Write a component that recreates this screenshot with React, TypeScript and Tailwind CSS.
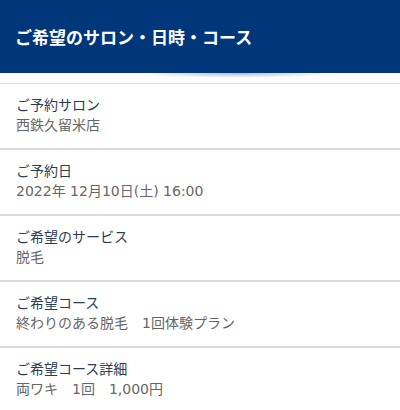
const rows = [
  { label: 'ご予約サロン', value: '西鉄久留米店' },
  { label: 'ご予約日', value: '2022年 12月10日(土) 16:00' },
  { label: 'ご希望のサービス', value: '脱毛' },
  { label: 'ご希望コース', value: '終わりのある脱毛\u30001回体験プラン' },
  { label: 'ご希望コース詳細', value: '両ワキ\u30001回\u30001,000円' },
];

export default function App() {
  return (
    <div className="w-[400px] h-[410px] overflow-hidden bg-white font-['DejaVu_Sans','Noto_Sans_CJK_JP',sans-serif]">
      <header className="h-[73px] bg-[#00377a] flex items-center px-[15px]">
        <h1 className="text-white text-[17px] font-bold font-['Noto_Sans_CJK_JP',sans-serif]">ご希望のサロン・日時・コース</h1>
      </header>
      <div className="h-[11px] border-b border-[#dcdcdc] bg-[radial-gradient(ellipse_100px_5px_at_59%_0%,rgba(0,30,70,0.3),transparent)]" />
      <ul>
        {rows.map((r) => (
          <li key={r.label} className="h-[66px] border-b-2 border-[#dadada] pl-4 pt-[11px]">
            <p className="text-[14px] leading-[20px] text-[#2b3d52]">{r.label}</p>
            <p className="text-[14px] leading-[20px] text-[#666666]">{r.value}</p>
          </li>
        ))}
      </ul>
    </div>
  );
}
